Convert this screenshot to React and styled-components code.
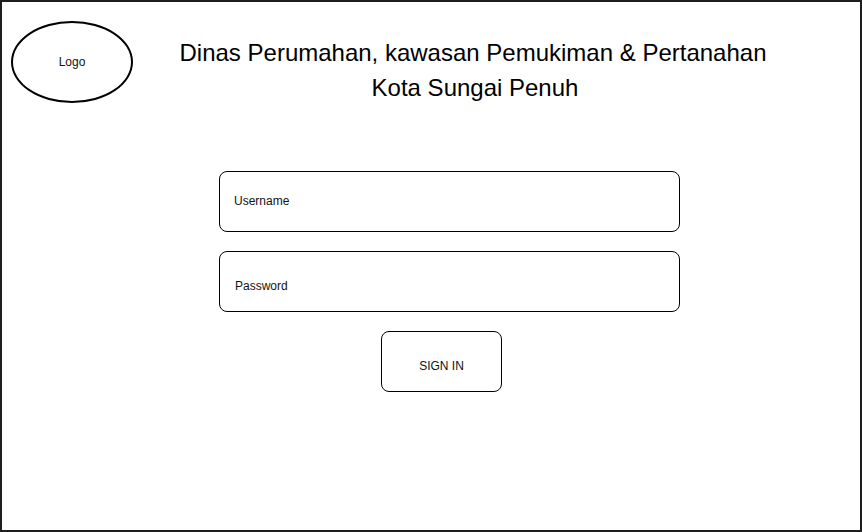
import React from "react";
import styled, { createGlobalStyle } from "styled-components";

const GlobalStyle = createGlobalStyle`
  html, body {
    margin: 0;
    padding: 0;
    background: #ffffff;
  }
  body {
    font-family: "Liberation Sans", Arial, sans-serif;
    color: #000;
  }
`;

const App = () => {
  return (
    <>
      <GlobalStyle />
      <Frame>
        <Header>
          <Logo>Logo</Logo>
          <Title>
            <TitleLine>Dinas Perumahan, kawasan Pemukiman &amp; Pertanahan</TitleLine>
            <TitleLine shift={2}>Kota Sungai Penuh</TitleLine>
          </Title>
        </Header>
        <Form>
          <Field offset={22}>Username</Field>
          <Field offset={27} indent={15}>
            Password
          </Field>
          <SignInButton>SIGN IN</SignInButton>
        </Form>
      </Frame>
    </>
  );
};

const Frame = styled.div`
  width: 862px;
  height: 532px;
  box-sizing: border-box;
  border: 2px solid #1e1e1e;
  background: #fff;
  overflow: hidden;
`;

const Header = styled.div`
  display: flex;
  align-items: flex-start;
  padding: 19px 0 0 9px;
`;

const Logo = styled.div`
  width: 122px;
  height: 82px;
  box-sizing: border-box;
  border: 2px solid #000;
  border-radius: 50%;
  display: flex;
  align-items: center;
  justify-content: center;
  font-size: 12px;
  color: #111;
  flex-shrink: 0;
`;

const Title = styled.div`
  width: 640px;
  margin: 14px 0 0 20px;
  text-align: center;
`;

const TitleLine = styled.div`
  font-size: 24px;
  line-height: 35px;
  color: #000;
  padding-left: ${(p) => (p.shift || 0) * 2}px;
`;

const Form = styled.div`
  display: flex;
  flex-direction: column;
  align-items: flex-start;
  gap: 19px;
  margin: 66px 0 0 217px;
`;

const Field = styled.div`
  width: 461px;
  height: 61px;
  box-sizing: border-box;
  border: 1px solid #000;
  border-radius: 8px;
  padding: ${(p) => p.offset}px 0 0 ${(p) => p.indent || 14}px;
  font-size: 12px;
  line-height: 14px;
  color: #111;
`;

const SignInButton = styled.div`
  width: 121px;
  height: 61px;
  box-sizing: border-box;
  border: 1px solid #000;
  border-radius: 8px;
  margin-left: 162px;
  display: flex;
  align-items: center;
  justify-content: center;
  padding-top: 8px;
  font-size: 12px;
  color: #111;
`;

export default App;
